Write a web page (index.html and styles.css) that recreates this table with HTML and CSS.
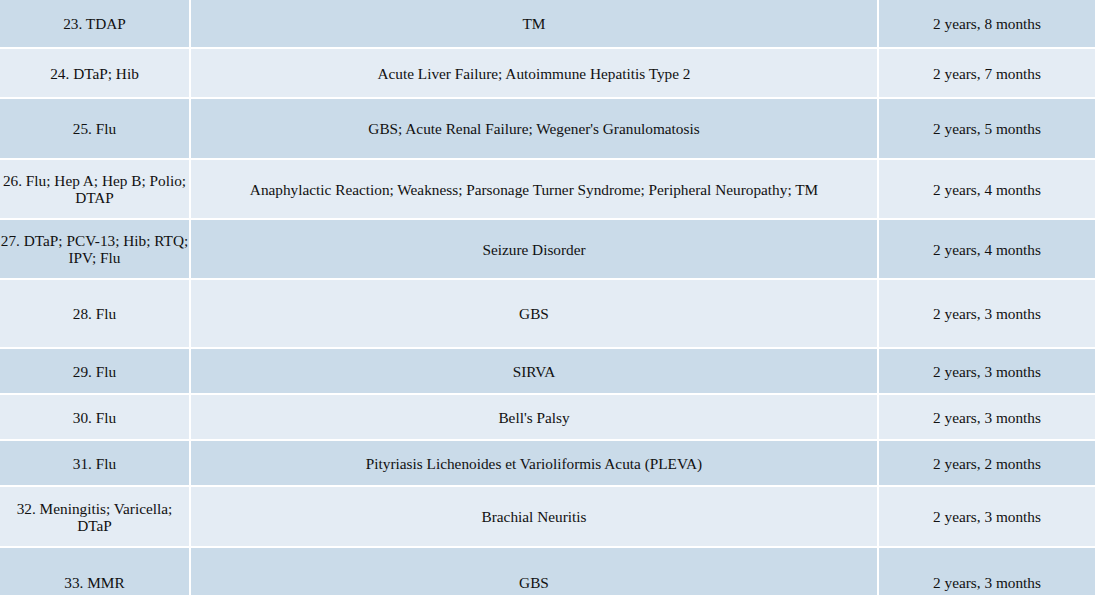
FILE: index.html
```html
<!DOCTYPE html>
<html lang="en">
<head>
<meta charset="utf-8">
<title>Vaccine injury cases</title>
<link rel="stylesheet" href="styles.css">
</head>
<body>
<div class="table">
  <div class="row dark h47"><div class="cell"><span class="txt">23. TDAP</span></div><div class="cell">TM</div><div class="cell">2 years, 8 months</div></div>
  <div class="row light h48"><div class="cell"><span class="txt">24. DTaP; Hib</span></div><div class="cell">Acute Liver Failure; Autoimmune Hepatitis Type 2</div><div class="cell">2 years, 7 months</div></div>
  <div class="row dark h59"><div class="cell"><span class="txt">25. Flu</span></div><div class="cell">GBS; Acute Renal Failure; Wegener's Granulomatosis</div><div class="cell">2 years, 5 months</div></div>
  <div class="row light h58"><div class="cell"><span class="txt">26. Flu; Hep A; Hep B; Polio; DTAP</span></div><div class="cell">Anaphylactic Reaction; Weakness; Parsonage Turner Syndrome; Peripheral Neuropathy; TM</div><div class="cell">2 years, 4 months</div></div>
  <div class="row dark h58"><div class="cell"><span class="txt">27. DTaP; PCV-13; Hib; RTQ; IPV; Flu</span></div><div class="cell">Seizure Disorder</div><div class="cell">2 years, 4 months</div></div>
  <div class="row light h67"><div class="cell"><span class="txt">28. Flu</span></div><div class="cell">GBS</div><div class="cell">2 years, 3 months</div></div>
  <div class="row dark h44"><div class="cell"><span class="txt">29. Flu</span></div><div class="cell">SIRVA</div><div class="cell">2 years, 3 months</div></div>
  <div class="row light h44"><div class="cell"><span class="txt">30. Flu</span></div><div class="cell">Bell's Palsy</div><div class="cell">2 years, 3 months</div></div>
  <div class="row dark h44"><div class="cell"><span class="txt">31. Flu</span></div><div class="cell">Pityriasis Lichenoides et Varioliformis Acuta (PLEVA)</div><div class="cell">2 years, 2 months</div></div>
  <div class="row light h59"><div class="cell"><span class="txt">32. Meningitis; Varicella; DTaP</span></div><div class="cell">Brachial Neuritis</div><div class="cell">2 years, 3 months</div></div>
  <div class="row dark h68"><div class="cell"><span class="txt">33. MMR</span></div><div class="cell">GBS</div><div class="cell">2 years, 3 months</div></div>
</div>
</body>
</html>
```
FILE: styles.css
```css
html, body {
  margin: 0;
  padding: 0;
  background: #ffffff;
  overflow: hidden;
  font-family: "Liberation Serif", "DejaVu Serif", serif;
}
.table {
  display: flex;
  flex-direction: column;
  gap: 2px;
  width: 1095px;
  font-family: "Liberation Serif", "DejaVu Serif", serif;
  font-size: 15.3px;
  line-height: 17px;
  color: #111111;
}
.row {
  display: grid;
  grid-template-columns: 189px 686px 216px;
  column-gap: 2px;
}
.cell {
  display: flex;
  align-items: center;
  justify-content: center;
  text-align: center;
  padding: 0;
  min-width: 0;
}
.txt {
  margin: 0 -1px;
}
.dark .cell { background: #cadbe9; }
.light .cell { background: #e4ecf4; }
.h44 { height: 44px; }
.h47 { height: 47px; }
.h48 { height: 48px; }
.h58 { height: 58px; }
.h59 { height: 59px; }
.h67 { height: 67px; }
.h68 { height: 68px; }
```
